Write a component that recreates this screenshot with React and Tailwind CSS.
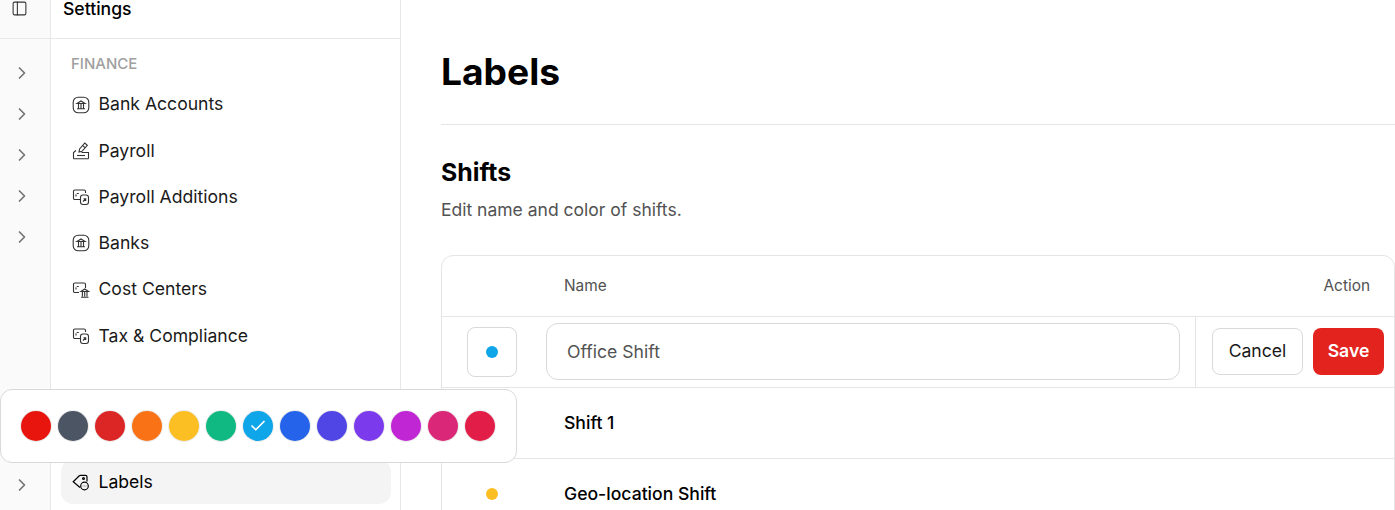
import React from "react";
import { ChevronRight, PanelLeft, Check } from "lucide-react";

const BankIcon = () => (
  <svg width="18" height="18" viewBox="0 0 18 18" fill="none" stroke="currentColor" strokeWidth="1.1" className="shrink-0 text-[#333]">
    <rect x="1.200" y="1.200" width="15.600" height="15.600" rx="5" />
    <path d="M5 7.500 9 5l4 2.500zM5 12.800h8M6.500 8v4.500M9 8v4.500M11.500 8v4.500" />
  </svg>
);

const PayrollIcon = () => (
  <svg width="18" height="18" viewBox="0 0 18 18" fill="none" stroke="currentColor" strokeWidth="1.1" className="shrink-0 text-[#333]">
    <path d="M4 8.500 1.500 10.500v5.500a.8.8 0 0 0 .8.8h13.400a.8.8 0 0 0 .8-.8v-5.500h-7" />
    <path d="M5 13.500h8" />
    <path d="M7 10l.6-3L12.800 1l2.500 2.300L10 9.300z" />
    <path d="M10.500 3.300l2.500 2.400" />
  </svg>
);

const TransferIcon = () => (
  <svg width="18" height="18" viewBox="0 0 18 18" fill="none" stroke="currentColor" strokeWidth="1.1" className="shrink-0 text-[#333]">
    <path d="M8 11.500H2.800a1.300 1.300 0 0 1-1.300-1.300V3.300A1.300 1.300 0 0 1 2.800 2h9.400a1.300 1.300 0 0 1 1.300 1.300V5" />
    <path d="M4 8.500V6.800A1.300 1.300 0 0 1 5.300 5.500H7" strokeDasharray="2 1" />
    <rect x="8.500" y="7" width="8" height="9.500" rx="2.500" />
    <path d="M11 13.500 13.500 11M11.500 10.800h2.200V13" />
  </svg>
);

const CostIcon = () => (
  <svg width="18" height="18" viewBox="0 0 18 18" fill="none" stroke="currentColor" strokeWidth="1.1" className="shrink-0 text-[#333]">
    <path d="M7 11.500H2.800a1.300 1.300 0 0 1-1.300-1.300V3.300A1.300 1.300 0 0 1 2.800 2h9.400a1.300 1.300 0 0 1 1.300 1.300V7" />
    <path d="M4 8.500V6.800A1.300 1.300 0 0 1 5.300 5.500H7" strokeDasharray="2 1" />
    <path d="M9 10.500 12.700 8l3.800 2.500zM9 16.300h7.500M10.400 11v4.500M12.700 11v4.500M15 11v4.500" />
  </svg>
);

const LabelIcon = () => (
  <svg width="18" height="18" viewBox="0 0 18 18" fill="none" stroke="currentColor" strokeWidth="1.200" className="shrink-0">
    <path d="M8 14.500 1.200 8.800 7.300 2.800a1.500 1.500 0 0 1 1.100-.5h5.100a1.500 1.500 0 0 1 1.500 1.500v4.700" />
    <circle cx="11.500" cy="5.500" r="0.900" />
    <circle cx="12.500" cy="13" r="3.800" />
    <path d="M10.800 13h.4M12.300 13h.4M13.800 13h.4" />
  </svg>
);

const navItems = [
  { label: "Bank Accounts", Icon: BankIcon },
  { label: "Payroll", Icon: PayrollIcon },
  { label: "Payroll Additions", Icon: TransferIcon },
  { label: "Banks", Icon: BankIcon },
  { label: "Cost Centers", Icon: CostIcon },
  { label: "Tax & Compliance", Icon: TransferIcon },
];

const swatches = [
  { bg: "bg-[#e7150d]", on: false },
  { bg: "bg-[#4b5563]", on: false },
  { bg: "bg-[#dc2626]", on: false },
  { bg: "bg-[#f97316]", on: false },
  { bg: "bg-[#fbbf24]", on: false },
  { bg: "bg-[#10b981]", on: false },
  { bg: "bg-[#0ea5e9]", on: true },
  { bg: "bg-[#2563eb]", on: false },
  { bg: "bg-[#4f46e5]", on: false },
  { bg: "bg-[#7c3aed]", on: false },
  { bg: "bg-[#c026d3]", on: false },
  { bg: "bg-[#db2777]", on: false },
  { bg: "bg-[#e11d48]", on: false },
];

export default function App() {
  return (
    <div className="relative flex h-[510px] w-[1395px] overflow-hidden bg-white font-['Inter',sans-serif] text-black">
      {/* sidebar */}
      <div className="flex w-[401px] shrink-0 flex-col border-r border-[#e8e8e8]">
        <div className="flex h-[39px] shrink-0 border-b border-[#e8e8e8]">
          <div className="w-[51px] shrink-0 border-r border-[#e8e8e8] bg-[#fafafa] pl-[11px]">
            <PanelLeft size={17} strokeWidth={1.5} className="text-[#333]" />
          </div>
          <div className="pl-3 text-[17.600px] font-medium leading-[18px]">Settings</div>
        </div>
        <div className="flex flex-1">
          <div className="flex w-[51px] shrink-0 flex-col items-center border-r border-[#e8e8e8] bg-[#fafafa] pt-[24px] pl-px pr-[7px] text-[#737373]">
            {[0, 1, 2, 3, 4].map((i) => (
              <div key={i} className="flex h-[41px] shrink-0 items-start justify-center">
                <ChevronRight size={20} strokeWidth={2} />
              </div>
            ))}
            <div className="mt-auto mb-[15px]">
              <ChevronRight size={20} strokeWidth={2} />
            </div>
          </div>
          <div className="flex flex-1 flex-col pl-[10px] pr-[9px] pt-[16px]">
            <div className="pl-[10px] text-[15px] font-medium leading-[18px] text-[#a0a0a0]">FINANCE</div>
            <div className="mt-[9.500px] flex flex-col gap-[2.300px]">
              {navItems.map(({ label, Icon }) => (
                <div key={label} className="flex h-[44px] items-center gap-[8.500px] px-[11px] text-[17.600px] text-[#1a1a1a]">
                  <Icon />
                  <span>{label}</span>
                </div>
              ))}
            </div>
            <div className="mt-auto mb-[6px] flex h-[44px] items-center gap-[8.500px] rounded-xl bg-[#f4f4f4] px-[11px] text-[17.600px]">
              <LabelIcon />
              <span>Labels</span>
            </div>
          </div>
        </div>
      </div>

      {/* main */}
      <div className="flex min-w-0 flex-1 flex-col pl-10 pt-[45px]">
        <h1 className="text-[37.200px] font-bold leading-[54px]">Labels</h1>
        <div className="mt-[25px] border-b border-[#e5e5e5]" />
        <h2 className="mt-[32px] text-[24.800px] font-bold leading-[30px]">Shifts</h2>
        <p className="mt-[11px] text-[17.500px] leading-[24px] text-[#525252]">Edit name and color of shifts.</p>
        <div className="mt-[33px] rounded-t-xl border border-[#e5e5e5]">
          <div className="flex h-[61px] items-center border-b border-[#e5e5e5] pb-px text-[15.400px] text-[#525252]">
            <div className="w-[104px] shrink-0" />
            <div className="flex-1 pl-[18px]">Name</div>
            <div className="pr-[24px]">Action</div>
          </div>
          <div className="flex h-[71px] items-center border-b border-[#e5e5e5]">
            <div className="flex w-[104px] shrink-0 justify-center">
              <div className="-ml-[5px] flex h-[50px] w-[50px] items-center justify-center rounded-lg border border-[#d9d9d9]">
                <span className="h-3 w-3 rounded-full bg-[#0ea5e9]" />
              </div>
            </div>
            <div className="flex flex-1 items-center pr-[15px]">
              <input
                readOnly
                value="Office Shift"
                className="-mt-px h-[57px] w-full rounded-xl border border-[#d9d9d9] px-5 text-[17.600px] text-[#525252] outline-none"
              />
            </div>
            <div className="flex h-full w-[199px] shrink-0 items-center gap-[10px] border-l border-[#e5e5e5] pb-[2px] pl-4">
              <button className="h-[47px] w-[91px] rounded-lg border border-[#d9d9d9] pt-px text-[17.600px] text-[#171717]">Cancel</button>
              <button className="h-[47px] w-[71px] rounded-lg bg-[#e3241e] pt-px text-[17.600px] font-semibold text-white">Save</button>
            </div>
          </div>
          <div className="flex h-[71px] items-center border-b border-[#e5e5e5]">
            <div className="w-[104px] shrink-0" />
            <div className="pl-[18px] text-[17.600px] font-medium">Shift 1</div>
          </div>
          <div className="flex h-[71px] items-center">
            <div className="flex w-[104px] shrink-0 justify-center">
              <span className="-ml-[5px] -mt-px h-3 w-3 rounded-full bg-[#fbbf24]" />
            </div>
            <div className="pl-[18px] text-[17.600px] font-medium">Geo-location Shift</div>
          </div>
        </div>
      </div>

      {/* color picker popover */}
      <div className="absolute left-0 top-[389px] flex h-[74px] w-[517px] items-center gap-[7px] rounded-xl border border-[#d9d9d9] bg-white pl-[20px]">
        {swatches.map((s) => (
          <span key={s.bg} className={`flex h-[30px] w-[30px] items-center justify-center rounded-full ring-1 ring-[#ececec] ${s.bg}`}>
            {s.on && <Check size={18} strokeWidth={2.25} className="text-white" />}
          </span>
        ))}
      </div>
    </div>
  );
}
